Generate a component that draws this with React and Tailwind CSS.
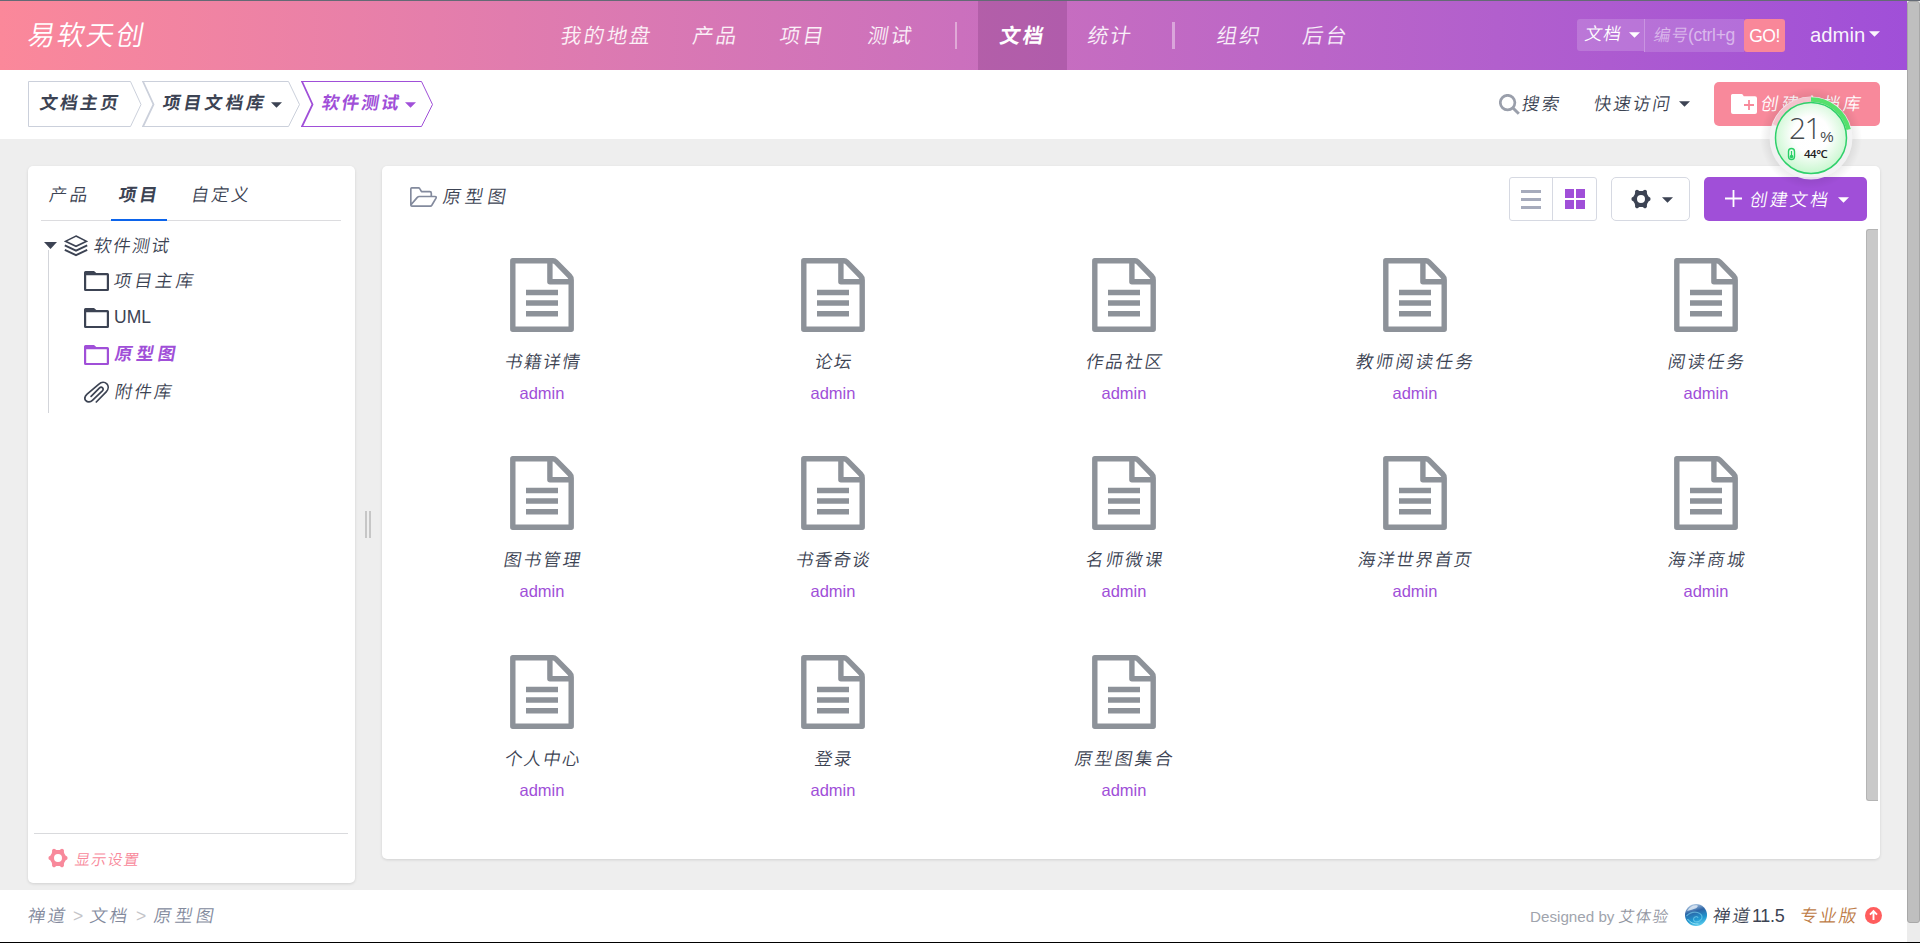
import React from "react";

const CJK = "font-['Liberation_Sans','Noto_Sans_CJK_SC',sans-serif]";

/* Slanted Chinese label */
function Zh({ children, className = "" }) {
  return (
    <span className={`inline-block shrink-0 whitespace-nowrap -skew-x-[10deg] ${className}`}>{children}</span>
  );
}

function Caret({ className = "" }) {
  return (
    <svg viewBox="0 0 12 6" className={`h-[6px] w-[11px] shrink-0 ${className}`} fill="currentColor">
      <path d="M0 0h12L6 6z" />
    </svg>
  );
}

function Gear({ className = "" }) {
  return (
    <svg viewBox="0 0 20 20" className={`shrink-0 ${className}`} fill="currentColor" fillRule="evenodd">
      <path d="M4.700 1.200Q6 .2 7.300 1.200L8.300 2h3.400l1-.8Q14 .2 15.300 1.200q1 .9.600 2.300l.3 1.700 1.500 2.600q1.900.5 1.900 2.200t-1.900 2.200l-1.500 2.600-.3 1.700q.4 1.400-.6 2.300-1.300 1-2.600 0l-1-.8H8.300l-1 .8q-1.300 1-2.600 0-1-.9-.6-2.300l-.3-1.700-1.500-2.600Q.4 11.700.4 10t1.900-2.200l1.500-2.600.3-1.700q-.4-1.400.6-2.300zM10 6a4 4 0 1 0 0 8 4 4 0 0 0 0-8z" />
    </svg>
  );
}

function Folder() {
  return (
    <svg viewBox="0 0 25 20" className="h-5 w-[25px] shrink-0" fill="currentColor" fillRule="evenodd">
      <path d="M1.500 0h8.500l2.300 2H23.500Q25 2 25 3.500v15Q25 20 23.500 20h-22Q0 20 0 18.500v-17Q0 0 1.500 0zM2.200 4.200v13.800h20.600v-13.800z" />
    </svg>
  );
}

function Layers() {
  return (
    <svg viewBox="0 0 24 22" className="h-[22px] w-6 shrink-0" fill="none" stroke="currentColor" strokeWidth="1.500">
      <path d="M12 1 22.600 6.300 12 11.300 1.400 6.300z" />
      <path d="M.8 10.300 12 15.600l11.200-5.300" strokeWidth="1.900" />
      <path d="M.8 14.800 12 20.200l11.200-5.400" strokeWidth="1.900" />
    </svg>
  );
}

function Clip() {
  return (
    <svg viewBox="0 0 25 22" className="h-[22px] w-[25px] shrink-0" fill="none" stroke="currentColor" strokeWidth="1.700" strokeLinecap="round">
      <path d="M12.300 21 22.200 10.800c2.600-2.700 2.400-6 .6-8-2-2-5.300-2.200-7.900.4L3.100 13.200c-2.500 2.300-2.800 4.700-1.200 6.500 1.700 1.800 4.400 1.700 6.500-.4l9.700-9.200c1.200-1.200 1.300-2.300.5-3.200-.9-.9-2.300-.7-3.300.3l-8.200 8.100" />
    </svg>
  );
}

function FolderOpen() {
  return (
    <svg viewBox="0 0 27 20" className="h-5 w-[27px] shrink-0 text-[#838a9d]" fill="none" stroke="currentColor" strokeWidth="1.700" strokeLinejoin="round">
      <path d="M21.300 9V6.200q0-1.500-1.500-1.500H11.500L9.900 1.800Q9.500.8 8.300.8H2.300Q.8.8.8 2.300v15.200q0 1.700 1.700 1.700h17.300q1.300 0 2-1l4.100-6.800q.9-1.900-1-1.900H9.300q-1.300 0-2 .9L1 17.800" />
    </svg>
  );
}

function DocIcon() {
  return (
    <svg viewBox="0 0 64 74" className="h-[74px] w-16 text-[#8d9299]" fill="none" stroke="currentColor" strokeWidth="5.400" strokeLinejoin="round">
      <path d="M2.800 2.800H43q1.600 0 3 1.400L59.600 18q1.600 1.600 1.600 4v49.200H2.800z" />
      <path d="M39.900 3v20.700h21" />
      <path d="M16 34.500h32M16 45h32M16 55.700h32" strokeLinejoin="miter" />
    </svg>
  );
}

function Crumb({ shape, box, children }) {
  return (
    <div className={`relative flex h-[46px] items-center ${box}`}>
      {shape}
      <div className="relative flex items-center">{children}</div>
    </div>
  );
}

const docs = [
  ["书籍详情", "tracking-[1.700px]"],
  ["论坛", "tracking-[1.600px]"],
  ["作品社区", "tracking-[2.100px]"],
  ["教师阅读任务", "tracking-[2.400px]"],
  ["阅读任务", "tracking-[2px]"],
  ["图书管理", "tracking-[2.200px]"],
  ["书香奇谈", "tracking-[1.300px]"],
  ["名师微课", "tracking-[2.200px]"],
  ["海洋世界首页", "tracking-[1.700px]"],
  ["海洋商城", "tracking-[2.200px]"],
  ["个人中心", "tracking-[1.600px]"],
  ["登录", "tracking-[1.600px]"],
  ["原型图集合", "tracking-[2.500px]"],
];

function Header() {
  return (
    <header className="flex h-[69px] items-center bg-linear-to-r from-[#fb889a] to-[#a04fd8] text-white">
      <Zh className="ml-[28px] w-[533px] text-[27.500px] tracking-[2px]">易软天创</Zh>
      <nav className="flex h-full items-center text-[20.500px] tracking-[2.400px] text-white/90">
        <Zh className="mt-[2px] w-[132px]">我的地盘</Zh>
        <Zh className="mt-[2px] w-[87px]">产品</Zh>
        <Zh className="mt-[2px] w-[88px]">项目</Zh>
        <Zh className="mt-[2px] w-[87px]">测试</Zh>
        <i className="h-[27px] w-[2px] bg-white/40" />
        <div className="ml-[21px] flex h-full w-[89px] items-center bg-[#702a6c]/25 pl-[22px] font-bold text-white">
          <Zh className="mt-[2px]">文档</Zh>
        </div>
        <Zh className="ml-[21px] mt-[2px] w-[84px] tracking-[1.700px]">统计</Zh>
        <i className="h-[27px] w-[3px] bg-white/40" />
        <Zh className="ml-[42px] mt-[2px] w-[86px] tracking-[1.800px]">组织</Zh>
        <Zh className="mt-[2px]">后台</Zh>
      </nav>
      <div className="ml-auto flex items-start">
        <div className="flex h-8 w-[67px] items-center rounded-l-[3px] bg-white/17 pl-[8px] text-white">
          <Zh className="-mt-[2px] w-[44px] text-[17.500px] tracking-[1px]">文档</Zh>
          <Caret className="-mt-px" />
        </div>
        <div className="flex h-[33px] w-[100px] items-center border-l border-white/25 bg-white/15 pl-[9px] text-[17.500px] text-white/50">
          <Zh className="text-[16.500px] tracking-[1px]">编号</Zh>
          <span className="-ml-px tracking-[-0.300px]">(ctrl+g</span>
        </div>
        <div className="flex h-[33px] w-[41px] items-center justify-center rounded-[3px] bg-[#f98799] pt-px text-[17.500px] tracking-[-0.500px]">GO!</div>
      </div>
      <div className="ml-[25px] mr-[27px] flex w-[70px] items-center text-[20.300px] text-white/95">
        <span className="-mt-px">admin</span>
        <Caret className="ml-[4px] -mt-[3px]" />
      </div>
    </header>
  );
}

function SubHeader() {
  return (
    <div className="flex h-[69px] items-center bg-white pb-[2px] pl-[28px] pr-[27px] text-[17.500px] text-[#3c4353]">
      <div className="flex font-bold tracking-[2.700px]">
        <Crumb
          box="w-[114px] pl-[12px]"
          shape={
            <svg className="absolute left-0 top-0 h-[46px] w-[114px]" fill="none" stroke="#cbd0db">
              <path d="M102.500.5H.5v45h102L113 23.500z" />
            </svg>
          }
        >
          <Zh>文档主页</Zh>
        </Crumb>
        <Crumb
          box="w-[159px] pl-[21px]"
          shape={
            <svg className="absolute left-0 top-0 h-[46px] w-[159px]" fill="none" stroke="#cbd0db">
              <path d="M0 .5h146.500L157.500 23.500 146.500 45.500H0" />
              <path d="M1 .5 11.500 23.500 1 45.500" strokeWidth="1.800" />
            </svg>
          }
        >
          <Zh className="w-[108px] tracking-[3.400px]">项目文档库</Zh>
          <Caret className="mt-[3px]" />
        </Crumb>
        <Crumb
          box="w-[134px] pl-[21px] text-[#a04fd8]"
          shape={
            <svg className="absolute left-0 top-0 h-[46px] w-[134px]" fill="none" stroke="#a04fd8">
              <path d="M0 .5h120.500L131.500 23.500 120.500 45.500H0" />
              <path d="M1 .5 11.500 23.500 1 45.500" strokeWidth="1.800" />
            </svg>
          }
        >
          <Zh className="w-[83px] tracking-[2.300px]">软件测试</Zh>
          <Caret className="mt-[3px]" />
        </Crumb>
      </div>
      <div className="ml-auto flex items-center">
        <svg viewBox="0 0 21 21" className="mt-px h-[21px] w-[21px] text-[#9a9fab]" fill="none" stroke="currentColor">
          <circle cx="8.600" cy="8.600" r="7.300" strokeWidth="2.700" />
          <path d="m14 14 5.800 5.800" strokeWidth="3" />
        </svg>
        <Zh className="ml-[2px] mt-[2px] w-[72px] tracking-[2.400px]">搜索</Zh>
        <Zh className="mt-px w-[85px] tracking-[2px]">快速访问</Zh>
        <Caret className="mt-px" />
        <div className="ml-6 flex h-11 w-[166px] items-center rounded-[5px] bg-[#f8899b] pl-[17px] text-white">
          <svg viewBox="0 0 26 20" className="h-5 w-[26px]" fill="currentColor">
            <path d="M1.500 0h9q1 0 1.500.9l.7 1.400H24q2 0 2 2V18q0 2-2 2H2q-2 0-2-2V1.500Q0 0 1.500 0z" />
            <path d="M18 6v10M13 11h10" stroke="#f8899b" strokeWidth="1.800" />
          </svg>
          <Zh className="ml-[4px] mt-[2px] tracking-[3.100px]">创建文档库</Zh>
        </div>
      </div>
    </div>
  );
}

function Sidebar() {
  return (
    <aside className="flex h-[717px] w-[327px] shrink-0 flex-col rounded-[5px] bg-white shadow-[0_1px_3px_rgba(0,0,0,0.120)]">
      <div className="ml-[13px] flex h-[55px] w-[300px] border-b border-[#dcdcdf] pl-[8px] text-[17.500px] leading-[59px]">
        <Zh className="ml-px w-[61px] tracking-[2.900px]">产品</Zh>
        <div className="h-[55px] w-[56px] border-b-2 border-[#0c64eb] pl-[8px] font-bold">
          <Zh className="tracking-[3px]">项目</Zh>
        </div>
        <Zh className="ml-[25px] tracking-[2.500px]">自定义</Zh>
      </div>
      <div className="flex-1 pt-[13px]">
        <div className="flex h-6 items-center pl-[16px]">
          <svg viewBox="0 0 13 7" className="-mt-[2px] h-[7px] w-[13px]" fill="currentColor">
            <path d="M0 0h13L6.500 7z" />
          </svg>
          <span className="ml-[7px]"><Layers /></span>
          <Zh className="ml-[6px] mt-px text-[17.500px] tracking-[1.700px]">软件测试</Zh>
        </div>
        <ul className="ml-[20px] -mt-[8px] h-[163px] border-l border-[#d3d5da] pt-[12px] text-[17.500px]">
          <li className="flex h-[37px] items-center pl-[35px]">
            <Folder />
            <Zh className="ml-[5px] mt-px tracking-[3.200px]">项目主库</Zh>
          </li>
          <li className="flex h-[37px] items-center pl-[35px]">
            <Folder />
            <span className="ml-[5px] text-[17.500px]">UML</span>
          </li>
          <li className="flex h-[37px] items-center pl-[35px] font-bold text-[#a04fd8]">
            <Folder />
            <Zh className="ml-[6px] tracking-[4px]">原型图</Zh>
          </li>
          <li className="flex h-[37px] items-center pl-[35px]">
            <Clip />
            <Zh className="ml-[6px] mt-px tracking-[2.100px]">附件库</Zh>
          </li>
        </ul>
      </div>
      <div className="mx-[6px] mr-[7px] flex h-[50px] items-center border-t border-[#d9dadd] pl-[14px] text-[15px] text-[#f8899b]">
        <Gear className="-mt-px h-5 w-5" />
        <Zh className="ml-[7px] mt-[3px] tracking-[1.300px]">显示设置</Zh>
      </div>
    </aside>
  );
}

function Main() {
  return (
    <section className="h-[693px] w-[1498px] shrink-0 rounded-[5px] bg-white shadow-[0_1px_3px_rgba(0,0,0,0.120)]">
      <div className="flex h-[63px] pl-[28px] pr-[13px] pt-[11px]">
        <div className="-mt-[2px] flex h-[44px] items-center">
          <FolderOpen />
          <Zh className="ml-[6px] text-[18px] tracking-[4.300px]">原型图</Zh>
        </div>
        <div className="ml-auto flex h-11">
          <div className="flex w-[88px] rounded-[3px] border border-[#d6d9e2]">
            <div className="flex w-[43px] flex-col items-center justify-center gap-[5px] border-r border-[#d6d9e2] text-[#a6abbc]">
              <i className="h-[3px] w-5 bg-current" />
              <i className="h-[3px] w-5 bg-current" />
              <i className="h-[3px] w-5 bg-current" />
            </div>
            <div className="grid flex-1 grid-cols-[9px_9px] content-center justify-center gap-[2px] text-[#a04fd8]">
              <i className="h-[9px] bg-current" />
              <i className="h-[9px] bg-current" />
              <i className="h-[9px] bg-current" />
              <i className="h-[9px] bg-current" />
            </div>
          </div>
          <div className="ml-[14px] flex w-[79px] items-center rounded-[5px] border border-[#d6d9e2] pl-[19px]">
            <Gear className="h-5 w-5" />
            <Caret className="ml-[11px] mt-px" />
          </div>
          <div className="ml-[14px] flex w-[163px] items-center rounded-[5px] bg-[#a04fd8] pl-[21px] text-[17.500px] text-white">
            <svg viewBox="0 0 17 17" className="-mt-px h-[17px] w-[17px]" stroke="currentColor" strokeWidth="1.800">
              <path d="M8.500 0v17M0 8.500h17" />
            </svg>
            <Zh className="ml-[8px] mt-[2px] w-[88px] tracking-[2.700px]">创建文档</Zh>
            <Caret className="mt-px" />
          </div>
        </div>
      </div>
      <div className="flex justify-between pl-[15px] pr-[2px]">
        <div className="grid grid-cols-[repeat(5,291px)] auto-rows-[198.300px] pt-[29px]">
          {docs.map(([name, track]) => (
            <div key={name} className="flex flex-col items-center">
              <div className="-ml-px"><DocIcon /></div>
              <Zh className={`ml-px mt-[18px] h-6 text-[17.500px] leading-6 ${track}`}>{name}</Zh>
              <span className="-ml-px mt-[7px] h-6 text-[16.500px] leading-6 text-[#a04fd8]">admin</span>
            </div>
          ))}
        </div>
        <div className="h-[572px] w-[12px] rounded-l-[3px] border border-r-0 border-[#b4b4b4] bg-[#c9c9c9]" />
      </div>
    </section>
  );
}

function Footer() {
  return (
    <footer className="flex h-[52px] items-center bg-white pl-[28px] pr-[25px] text-[17.500px] text-[#838a9d]">
      <Zh className="w-[45px] tracking-[2.200px]">禅道</Zh>
      <span className="w-[17px] text-[#c4c4c8]">&gt;</span>
      <Zh className="w-[46px] tracking-[2.200px]">文档</Zh>
      <span className="w-[18px] text-[#c4c4c8]">&gt;</span>
      <Zh className="tracking-[3.700px]">原型图</Zh>
      <div className="ml-auto flex items-center">
        <span className="mt-[2px] w-[89px] whitespace-nowrap text-[15.200px] text-[#a0a4ad]">Designed by</span>
        <Zh className="mt-[2px] w-[66px] text-[15.500px] tracking-[1.300px] text-[#9296a1]">艾体验</Zh>
        <svg viewBox="0 0 22 22" className="-mt-[2px] h-[22px] w-[22px]" fill="none">
          <defs>
            <linearGradient id="orb" x1="0.300" y1="0" x2="0.600" y2="1">
              <stop offset="0" stopColor="#b9cfe6" />
              <stop offset="0.350" stopColor="#2c64a6" />
              <stop offset="0.700" stopColor="#1f97d0" />
              <stop offset="1" stopColor="#5ccdee" />
            </linearGradient>
          </defs>
          <circle cx="11" cy="11" r="11" fill="url(#orb)" />
          <path d="M2 7Q6 .5 12 1.200q2 .5-1 3Q7 6 2 7z" fill="#e6eff7" opacity=".8" />
          <path d="M1.500 12q5-5 11-3.500 6 2 4 6.500-3 4-6.500 2.500-3-2.500 0-4.500 2.500-1 3 1" stroke="#7fd8f2" strokeWidth="1.200" opacity=".6" />
          <path d="M2.500 15q4 5.500 11 5" stroke="#a5ebf8" strokeWidth="1" opacity=".8" />
        </svg>
        <span className="ml-[6px] flex w-[87px] items-center text-[18px] tracking-[-0.300px] text-[#3c4353]">
          <Zh className="w-[39px] text-[17.500px] tracking-[2px]">禅道</Zh>11.5
        </span>
        <Zh className="w-[65px] tracking-[2px] text-[#bd7b46]">专业版</Zh>
        <svg viewBox="0 0 17 17" className="-mt-[2px] h-[17px] w-[17px]">
          <circle cx="8.500" cy="8.500" r="8.500" fill="#ff5d5d" />
          <path d="M8.500 13V4.500M5 7.700l3.500-3.500L12 7.700" fill="none" stroke="#fff" strokeWidth="1.900" />
        </svg>
      </div>
    </footer>
  );
}

function Gauge() {
  return (
    <div className="absolute left-[1759px] top-[85px] h-[104px] w-[104px]">
      <svg viewBox="0 0 104 104" className="absolute inset-0 h-full w-full" fill="none">
        <defs>
          <radialGradient id="halo">
            <stop offset="0.780" stopColor="#000" stopOpacity="0.080" />
            <stop offset="1" stopColor="#000" stopOpacity="0" />
          </radialGradient>
          <radialGradient id="face" cx="0.500" cy="0.450" r="0.560">
            <stop offset="0.450" stopColor="#fff" stopOpacity="0.970" />
            <stop offset="1" stopColor="#c4f7cb" stopOpacity="0.950" />
          </radialGradient>
        </defs>
        <circle cx="52" cy="52" r="51" fill="url(#halo)" />
        <circle cx="52" cy="52" r="41.500" fill="#f4f4f5" fillOpacity="0.880" />
        <path d="M14 38A40 40 0 0 1 52 11V17A36 36 0 0 0 18 40z" fill="#f4b9c4" opacity="0.800" />
        <circle cx="52" cy="52" r="35.500" fill="url(#face)" stroke="#2fd06b" strokeWidth="1.500" />
        <path d="M52 13.500A38.500 38.500 0 0 1 89.600 43.500" stroke="#55e06c" strokeWidth="4.500" />
        <rect x="29.500" y="62.500" width="6" height="11" rx="3" stroke="#28cf66" strokeWidth="1.400" />
        <path d="M32.500 65v4" stroke="#28cf66" strokeWidth="1.200" />
        <circle cx="32.500" cy="70.500" r="1.800" fill="#28cf66" />
      </svg>
      <div className="relative flex h-full flex-col pl-[30px] pt-[27px] text-[#454a4d]">
        <div className="flex h-[30px] items-end">
          <span className="font-['Open_Sans',sans-serif] text-[30px] font-[350] leading-[30px] tracking-[-1.500px]">21</span>
          <span className="mb-[-2px] text-[15px] leading-[17px]">%</span>
        </div>
        <span className="ml-[15px] mt-[5px] font-['Open_Sans',sans-serif] text-[11.500px] font-semibold leading-[12px] tracking-[-0.500px] text-[#222]">44°C</span>
      </div>
    </div>
  );
}

export default function App() {
  return (
    <div className={`relative flex h-[943px] w-[1920px] flex-col overflow-hidden border-t border-t-[#646a75] border-b border-b-black bg-[#eee] text-[16.250px] font-[350] text-[#3c4353] ${CJK}`}>
      <div className="flex flex-1">
        <div className="flex w-[1907px] flex-col">
          <Header />
          <SubHeader />
          <div className="flex h-[751px] pl-[28px] pt-[27px]">
            <Sidebar />
            <div className="flex w-[27px] shrink-0 gap-[2px] pl-[10px] pt-[345px]">
              <i className="h-[27px] w-[2px] bg-[#c6c6c6]" />
              <i className="h-[27px] w-[2px] bg-[#c6c6c6]" />
            </div>
            <Main />
          </div>
          <Footer />
        </div>
        <div className="flex w-[13px] flex-col bg-[#ececec]">
          <div className="h-[922px] rounded-[3px] border border-[#a8a8a8] bg-[#bfbfbf]" />
        </div>
      </div>
      <Gauge />
    </div>
  );
}
